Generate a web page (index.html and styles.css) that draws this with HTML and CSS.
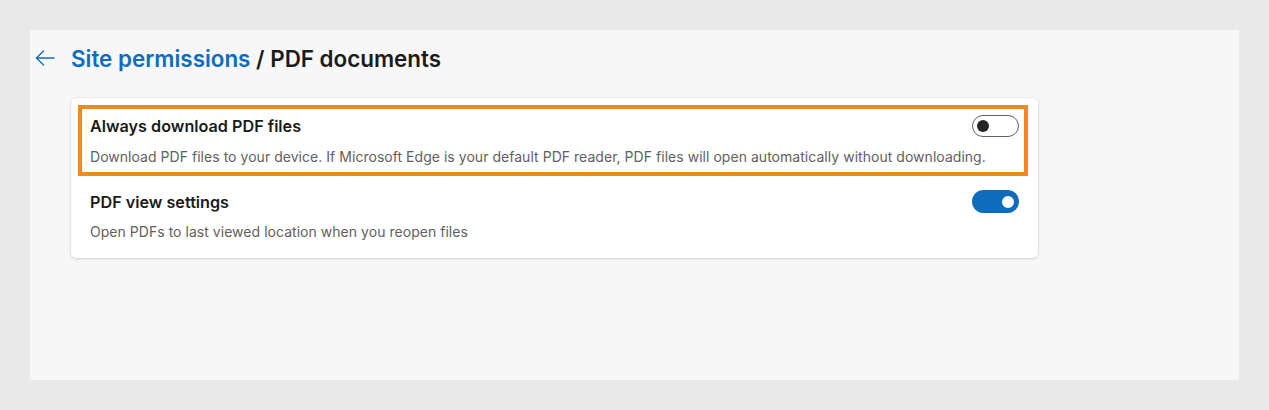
FILE: index.html
```html
<!DOCTYPE html>
<html lang="en">
<head>
<meta charset="utf-8">
<title>PDF documents</title>
<link rel="stylesheet" href="styles.css">
</head>
<body>
<div class="panel">
  <header class="header">
    <span class="back" aria-label="Back">
      <svg width="22" height="22" viewBox="0 0 22 22" fill="none" stroke="#0f6cbd" stroke-width="1.3" stroke-linecap="round" stroke-linejoin="round"><path d="M20 11H2.5"/><path d="M9.5 4L2.5 11l7 7"/></svg>
    </span>
    <h1 class="title"><a class="crumb" href="#">Site permissions</a> / PDF documents</h1>
  </header>
  <section class="card">
    <div class="row row-highlight">
      <div class="row-head">
        <div class="row-title">Always download PDF files</div>
        <span class="toggle"><span class="knob"></span></span>
      </div>
      <div class="row-desc">Download PDF files to your device. If Microsoft Edge is your default PDF reader, PDF files will open automatically without downloading.</div>
    </div>
    <div class="row row-plain">
      <div class="row-head">
        <div class="row-title">PDF view settings</div>
        <span class="toggle toggle-on"><span class="knob"></span></span>
      </div>
      <div class="row-desc">Open PDFs to last viewed location when you reopen files</div>
    </div>
  </section>
</div>
</body>
</html>
```
FILE: styles.css
```css
* { box-sizing: border-box; }
html, body { margin: 0; padding: 0; }
body {
  background: #e9e9e9;
  font-family: Inter, "Noto Sans", "Liberation Sans", sans-serif;
  color: #1b1b1b;
  padding: 30px;
}
.panel {
  background: #f7f7f7;
  width: 1209px;
  height: 350px;
  padding: 13px 0 0 4px;
}
.header {
  display: flex;
  align-items: center;
  height: 30px;
}
.back {
  display: flex;
  width: 22px;
  height: 22px;
  margin-right: 15px;
}
.title {
  margin: 0;
  font-size: 22.4px;
  font-weight: 600;
  color: #1b1b1b;
}
.crumb {
  color: #0f6cbd;
  text-decoration: none;
}
.card {
  margin: 25px 0 0 37px;
  width: 967px;
  height: 160px;
  background: #fff;
  border-radius: 5px;
  box-shadow: 0 0 2px rgba(0,0,0,0.12), 0 1px 3px rgba(0,0,0,0.12);
  padding: 7px 10px 0 7px;
}
.row {
  border: 4px solid transparent;
  padding: 6px 5px 0 8px;
}
.row-head {
  display: flex;
  align-items: center;
  justify-content: space-between;
}
.row-highlight {
  border-color: #f08a1c;
  height: 71px;
}
.row-plain {
  padding-top: 10px;
}
.row-plain .row-desc {
  margin-top: 9px;
}
.row-title {
  font-size: 16.2px;
  font-weight: 600;
  line-height: 22px;
  color: #1b1b1b;
}
.row-desc {
  margin-top: 10px;
  font-size: 14px;
  line-height: 20px;
  letter-spacing: 0.035px;
  white-space: nowrap;
  color: #616161;
}
.toggle {
  flex: none;
  position: relative;
  width: 47px;
  height: 22px;
  border: 1px solid #616161;
  border-radius: 11px;
  background: #fff;
}
.toggle .knob {
  position: absolute;
  left: 4px;
  top: 4px;
  width: 12px;
  height: 12px;
  border-radius: 50%;
  background: #242424;
}
.toggle-on {
  background: #0f6cbd;
  border-color: #0f6cbd;
  height: 23px;
}
.toggle-on .knob {
  left: auto;
  right: 4px;
  top: 4.5px;
  background: #fff;
}
```
